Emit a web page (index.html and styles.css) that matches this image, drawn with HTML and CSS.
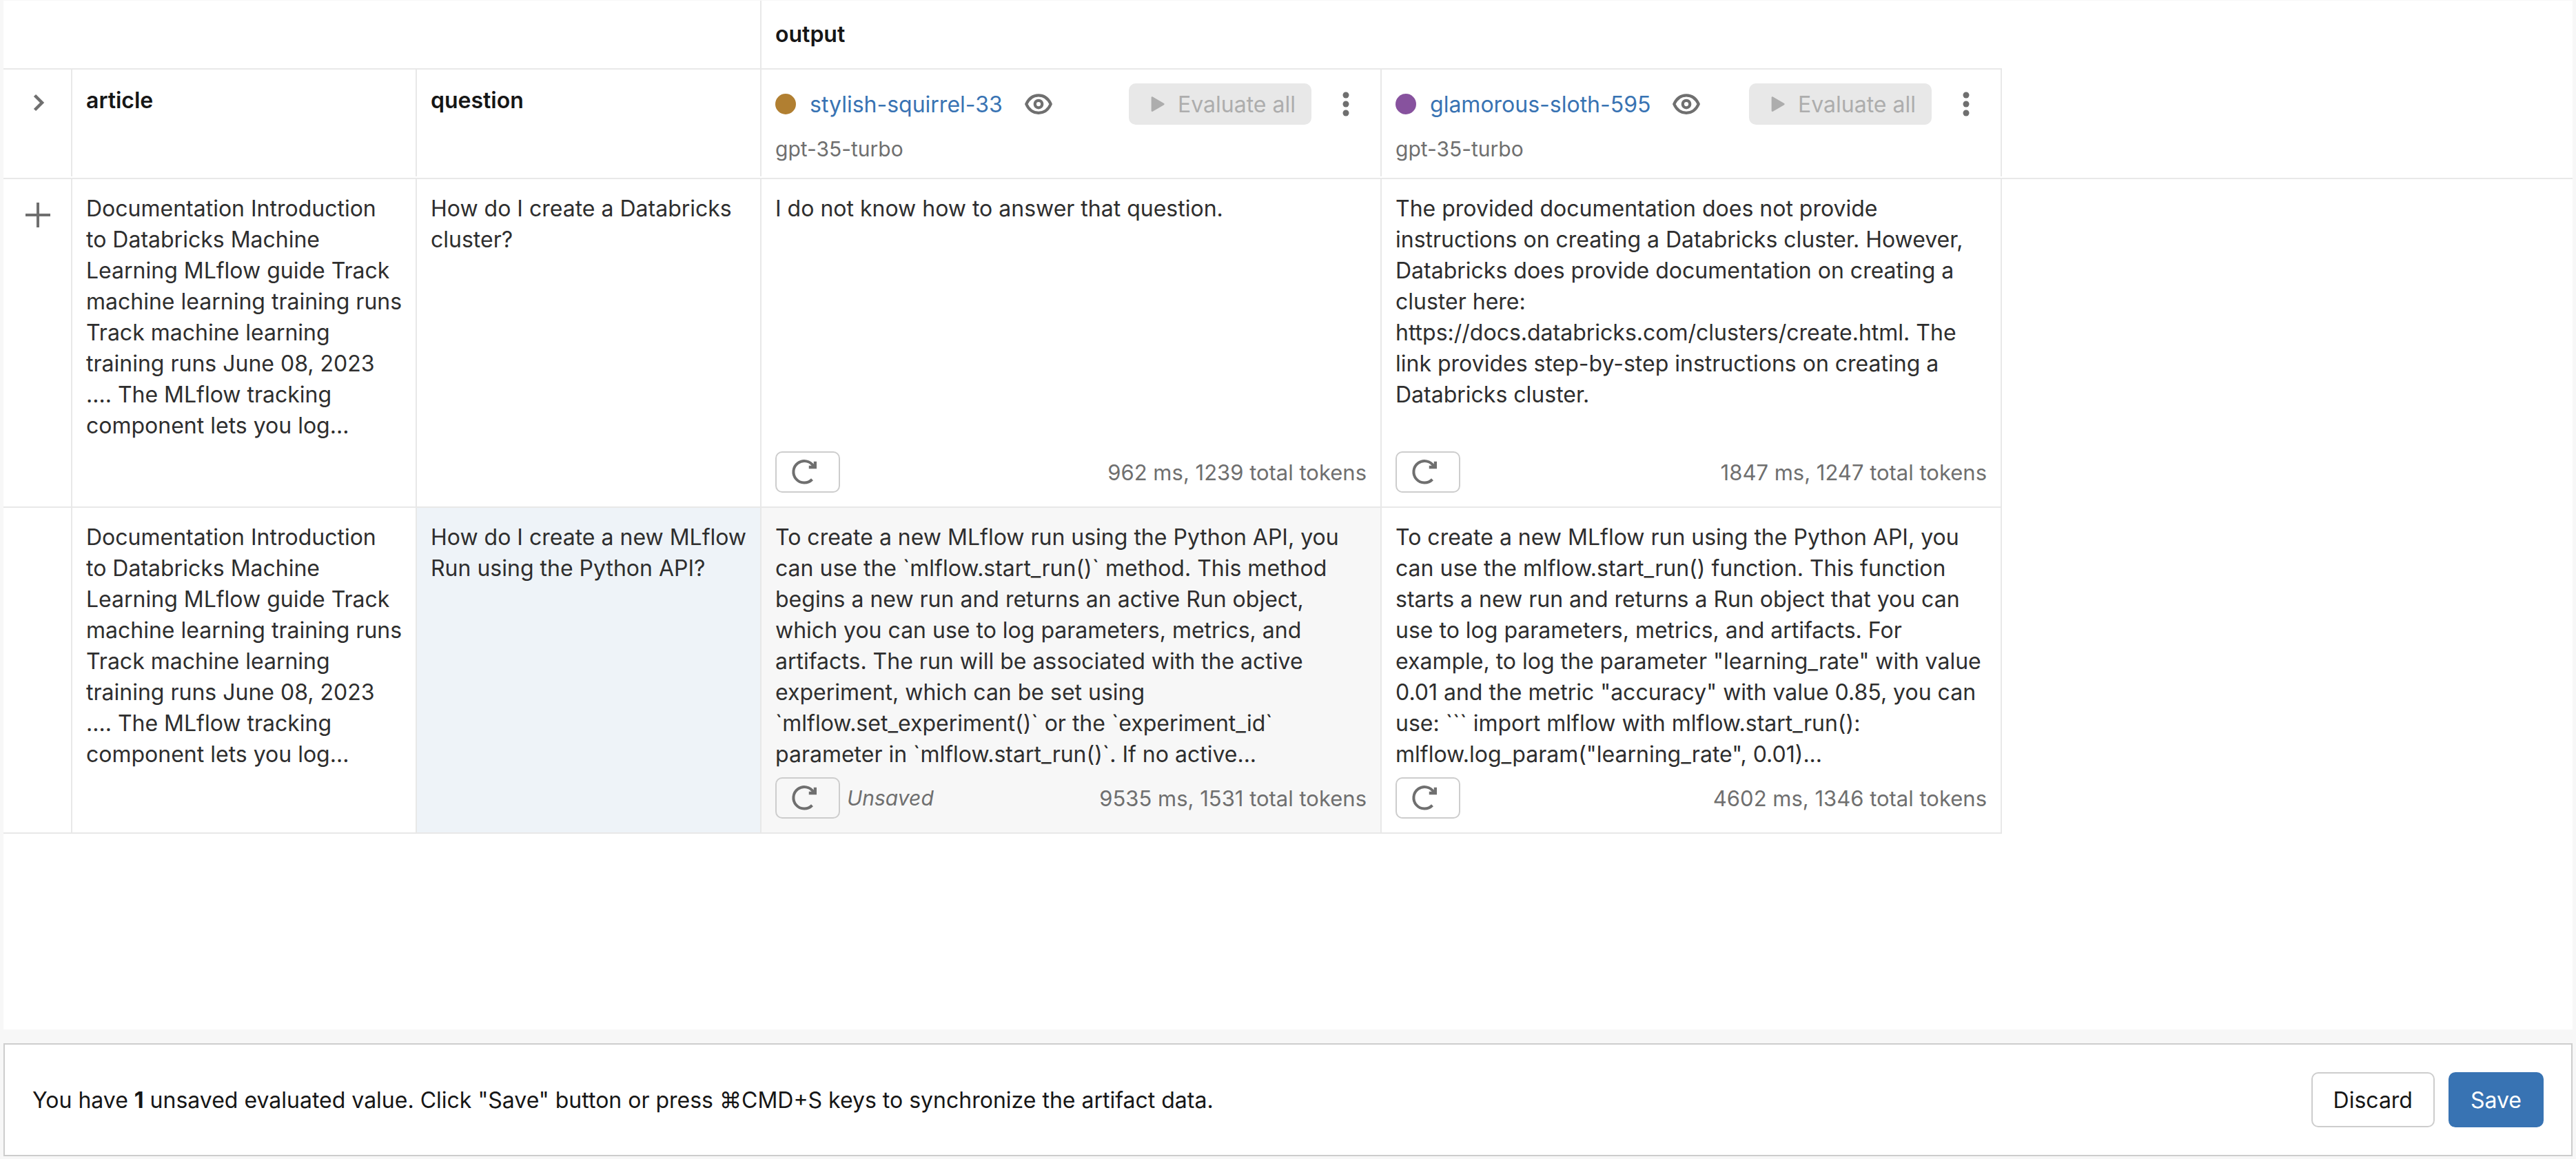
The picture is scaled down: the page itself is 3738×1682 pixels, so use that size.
FILE: index.html
```html
<!DOCTYPE html>
<html lang="en">
<head>
<meta charset="utf-8">
<title>Evaluation</title>
<link rel="stylesheet" href="styles.css">
</head>
<body>
<svg class="sprite" aria-hidden="true">
  <symbol id="eye" viewBox="0 0 16 16"><path fill="none" stroke="currentColor" stroke-width="1.7" stroke-linejoin="round" d="M.9 8C2.300 4.800 4.900 2.900 8 2.900s5.700 1.900 7.100 5.100c-1.400 3.200-4 5.100-7.100 5.100S2.300 11.200.9 8z"/><circle cx="8" cy="8" r="2.100" fill="none" stroke="currentColor" stroke-width="1.700"/></symbol>
  <symbol id="play" viewBox="0 0 16 16"><path fill="currentColor" d="M3 2.900v10.300c0 .6.600.8 1.100.5l8.700-5.100c.5-.3.5-.8 0-1.100L4.100 2.400C3.600 2.100 3 2.300 3 2.900z"/></symbol>
  <symbol id="dots" viewBox="0 0 16 16"><g fill="currentColor"><circle cx="8" cy="2.800" r="1.800"/><circle cx="8" cy="8" r="1.800"/><circle cx="8" cy="13.200" r="1.800"/></g></symbol>
  <symbol id="redo" viewBox="0 0 16 16"><path fill="none" stroke="currentColor" stroke-width="1.600" d="M12.600 12.300A6.300 6.300 0 1 1 13.400 4.600"/><path fill="currentColor" d="M15.200 1.900V6.100H10.700V4.300H12.300L13.500 3.500V1.900z"/></symbol>
  <symbol id="chevron" viewBox="0 0 16 16"><path fill="none" stroke="currentColor" stroke-width="1.800" d="M5.800 3.800 10 8l-4.200 4.200"/></symbol>
  <symbol id="plus" viewBox="0 0 16 16"><path fill="none" stroke="currentColor" stroke-width="1.600" d="M8 .8v14.400M.8 8h14.400"/></symbol>
</svg>
<main class="page">
  <div class="grid-area">
    <table class="grid">
      <colgroup><col class="col-tools"><col class="col-input"><col class="col-input"><col class="col-run"><col class="col-run"><col></colgroup>
      <thead>
        <tr class="row-group"><td colspan="3"></td><th colspan="2" class="no-edge">output</th><td class="rest"></td></tr>
        <tr class="row-head">
          <td class="tool"><button class="icon-btn" aria-label="Expand"><svg class="icon"><use href="#chevron"/></svg></button></td>
          <th>article</th>
          <th>question</th>
          <th class="run">
            <div class="run-bar"><span class="dot dot-ochre"></span><a href="#">stylish-squirrel-33</a><button class="icon-btn" aria-label="Hide run"><svg class="icon"><use href="#eye"/></svg></button><button class="evaluate" disabled><svg class="icon-small"><use href="#play"/></svg>Evaluate all</button><button class="icon-btn" aria-label="More"><svg class="icon"><use href="#dots"/></svg></button></div>
            <div class="model">gpt-35-turbo</div>
          </th>
          <th class="run">
            <div class="run-bar"><span class="dot dot-purple"></span><a href="#">glamorous-sloth-595</a><button class="icon-btn" aria-label="Hide run"><svg class="icon"><use href="#eye"/></svg></button><button class="evaluate" disabled><svg class="icon-small"><use href="#play"/></svg>Evaluate all</button><button class="icon-btn" aria-label="More"><svg class="icon"><use href="#dots"/></svg></button></div>
            <div class="model">gpt-35-turbo</div>
          </th>
          <td class="rest"></td>
        </tr>
      </thead>
      <tbody>
        <tr class="row-first">
          <td class="tool"><button class="icon-btn" aria-label="Add row"><svg class="icon"><use href="#plus"/></svg></button></td>
          <td>Documentation Introduction<br>to Databricks Machine<br>Learning MLflow guide Track<br>machine learning training runs<br>Track machine learning<br>training runs June 08, 2023<br>.... The MLflow tracking<br>component lets you log...</td>
          <td>How do I create a Databricks<br>cluster?</td>
          <td><div class="answer">I do not know how to answer that question.</div><div class="meta"><button class="redo" aria-label="Re-evaluate"><svg class="icon"><use href="#redo"/></svg></button><span class="stats">962 ms, 1239 total tokens</span></div></td>
          <td><div class="answer">The provided documentation does not provide<br>instructions on creating a Databricks cluster. However,<br>Databricks does provide documentation on creating a<br>cluster here:<br>https://docs.databricks.com/clusters/create.html. The<br>link provides step-by-step instructions on creating a<br>Databricks cluster.</div><div class="meta"><button class="redo" aria-label="Re-evaluate"><svg class="icon"><use href="#redo"/></svg></button><span class="stats">1847 ms, 1247 total tokens</span></div></td>
          <td class="blank"></td>
        </tr>
        <tr>
          <td class="tool"></td>
          <td>Documentation Introduction<br>to Databricks Machine<br>Learning MLflow guide Track<br>machine learning training runs<br>Track machine learning<br>training runs June 08, 2023<br>.... The MLflow tracking<br>component lets you log...</td>
          <td class="selected">How do I create a new MLflow<br>Run using the Python API?</td>
          <td class="unsaved"><div class="answer">To create a new MLflow run using the Python API, you<br>can use the `mlflow.start_run()` method. This method<br>begins a new run and returns an active Run object,<br>which you can use to log parameters, metrics, and<br>artifacts. The run will be associated with the active<br>experiment, which can be set using<br>`mlflow.set_experiment()` or the `experiment_id`<br>parameter in `mlflow.start_run()`. If no active...</div><div class="meta"><button class="redo" aria-label="Re-evaluate"><svg class="icon"><use href="#redo"/></svg></button><em>Unsaved</em><span class="stats">9535 ms, 1531 total tokens</span></div></td>
          <td><div class="answer">To create a new MLflow run using the Python API, you<br>can use the mlflow.start_run() function. This function<br>starts a new run and returns a Run object that you can<br>use to log parameters, metrics, and artifacts. For<br>example, to log the parameter "learning_rate" with value<br>0.01 and the metric "accuracy" with value 0.85, you can<br>use: ``` import mlflow with mlflow.start_run():<br>mlflow.log_param("learning_rate", 0.01)...</div><div class="meta"><button class="redo" aria-label="Re-evaluate"><svg class="icon"><use href="#redo"/></svg></button><span class="stats">4602 ms, 1346 total tokens</span></div></td>
          <td class="blank"></td>
        </tr>
      </tbody>
    </table>
  </div>
  <footer class="save-bar">
    <p>You have <strong>1</strong> unsaved evaluated value. Click "Save" button or press ⌘CMD+S keys to synchronize the artifact data.</p>
    <button class="btn">Discard</button>
    <button class="btn btn-primary">Save</button>
  </footer>
</main>
</body>
</html>
```
FILE: styles.css
```css
* { box-sizing: border-box; }
body {
  margin: 0;
  background: #f7f7f7;
  color: #2e2e2e;
  font: 32px/45px Inter, "Liberation Sans", "DejaVu Sans", sans-serif;
}
.sprite { position: absolute; width: 0; height: 0; }
.page {
  display: flex;
  flex-direction: column;
  gap: 20px;
  min-height: 100vh;
  padding: 1px 5px 4px;
}
.grid-area { flex: 1; background: #fff; }
.grid {
  width: 100%;
  table-layout: fixed;
  border-collapse: separate;
  border-spacing: 0;
}
.col-tools { width: 100px; }
.col-input { width: 500px; }
.col-run { width: 900px; }
.grid th, .grid td {
  padding: 20px;
  border-right: 2px solid #e8e8e8;
  border-bottom: 2px solid #e8e8e8;
  text-align: left;
  vertical-align: top;
  white-space: nowrap;
}
.grid th { color: #161616; font-weight: 600; }
.grid .no-edge { border-right: 0; }
.grid .blank { border: 0; }
.grid .row-group > * { height: 100px; padding: 26px 20px; }
.grid .row-group .rest { border: 0; }

/* Header dividers stop just above the line under the header */
.grid .row-head > * {
  height: 159px;
  padding: 22px 22px 20px 20px;
  border-right: 0;
  background: linear-gradient(#e8e8e8, #e8e8e8) right top / 2px calc(100% - 2px) no-repeat;
}
.grid .row-head .rest { background: none; }
.grid .row-head .run { padding-top: 20px; font-weight: 400; }
.grid .row-head .tool { padding: 28px 0 0 2px; }
.grid .tool { padding: 32px 0 0 2px; }
.tool .icon-btn { margin: 0 auto; }

button { font: inherit; color: inherit; }
.icon, .icon-small { display: block; width: 40px; height: 40px; }
.icon-small { width: 30px; height: 30px; }
.icon-btn {
  display: flex;
  width: 40px;
  padding: 0;
  border: 0;
  background: none;
  color: #6f6f6f;
}
a { color: #3873b3; text-decoration: none; }
.run-bar { display: flex; align-items: center; height: 60px; }
.run-bar a { margin: 0 32px 0 20px; }
.dot { width: 30px; height: 30px; border-radius: 50%; }
.dot-ochre { background: #b17f31; }
.dot-purple { background: #87529e; }
.evaluate {
  display: flex;
  align-items: center;
  justify-content: center;
  gap: 14px;
  width: 265px;
  height: 60px;
  margin: 0 30px 0 auto;
  padding: 0 0 0 4px;
  border: 0;
  border-radius: 10px;
  background: #e8e8e8;
  color: #adadad;
}
.run-bar .icon-btn:last-child { margin-right: 10px; }
.model { color: #6f6f6f; font-size: 30px; line-height: 40px; margin-top: 15px; }

.answer { min-height: 371px; }
.row-first .answer { min-height: 375px; }
.meta { display: flex; align-items: center; gap: 10px; color: #6f6f6f; font-size: 30px; }
.redo {
  width: 94px;
  height: 60px;
  padding: 0 0 0 20px;
  border: 2px solid #cdcdcd;
  border-radius: 10px;
  background: none;
}
.stats { margin-left: auto; font-size: 31px; }
.selected { background: #eef3f8; }
.unsaved { background: #f7f7f7; }

.save-bar {
  display: flex;
  align-items: center;
  gap: 20px;
  padding: 40px;
  border: 2px solid #cdcdcd;
  background: #fff;
  color: #161616;
}
.save-bar p { flex: 1; margin: 0; }
.btn {
  height: 80px;
  padding: 0 30px;
  border: 2px solid #cdcdcd;
  border-radius: 10px;
  background: #fff;
}
.btn-primary { border-color: #3873b3; background: #3873b3; color: #fff; }
```
